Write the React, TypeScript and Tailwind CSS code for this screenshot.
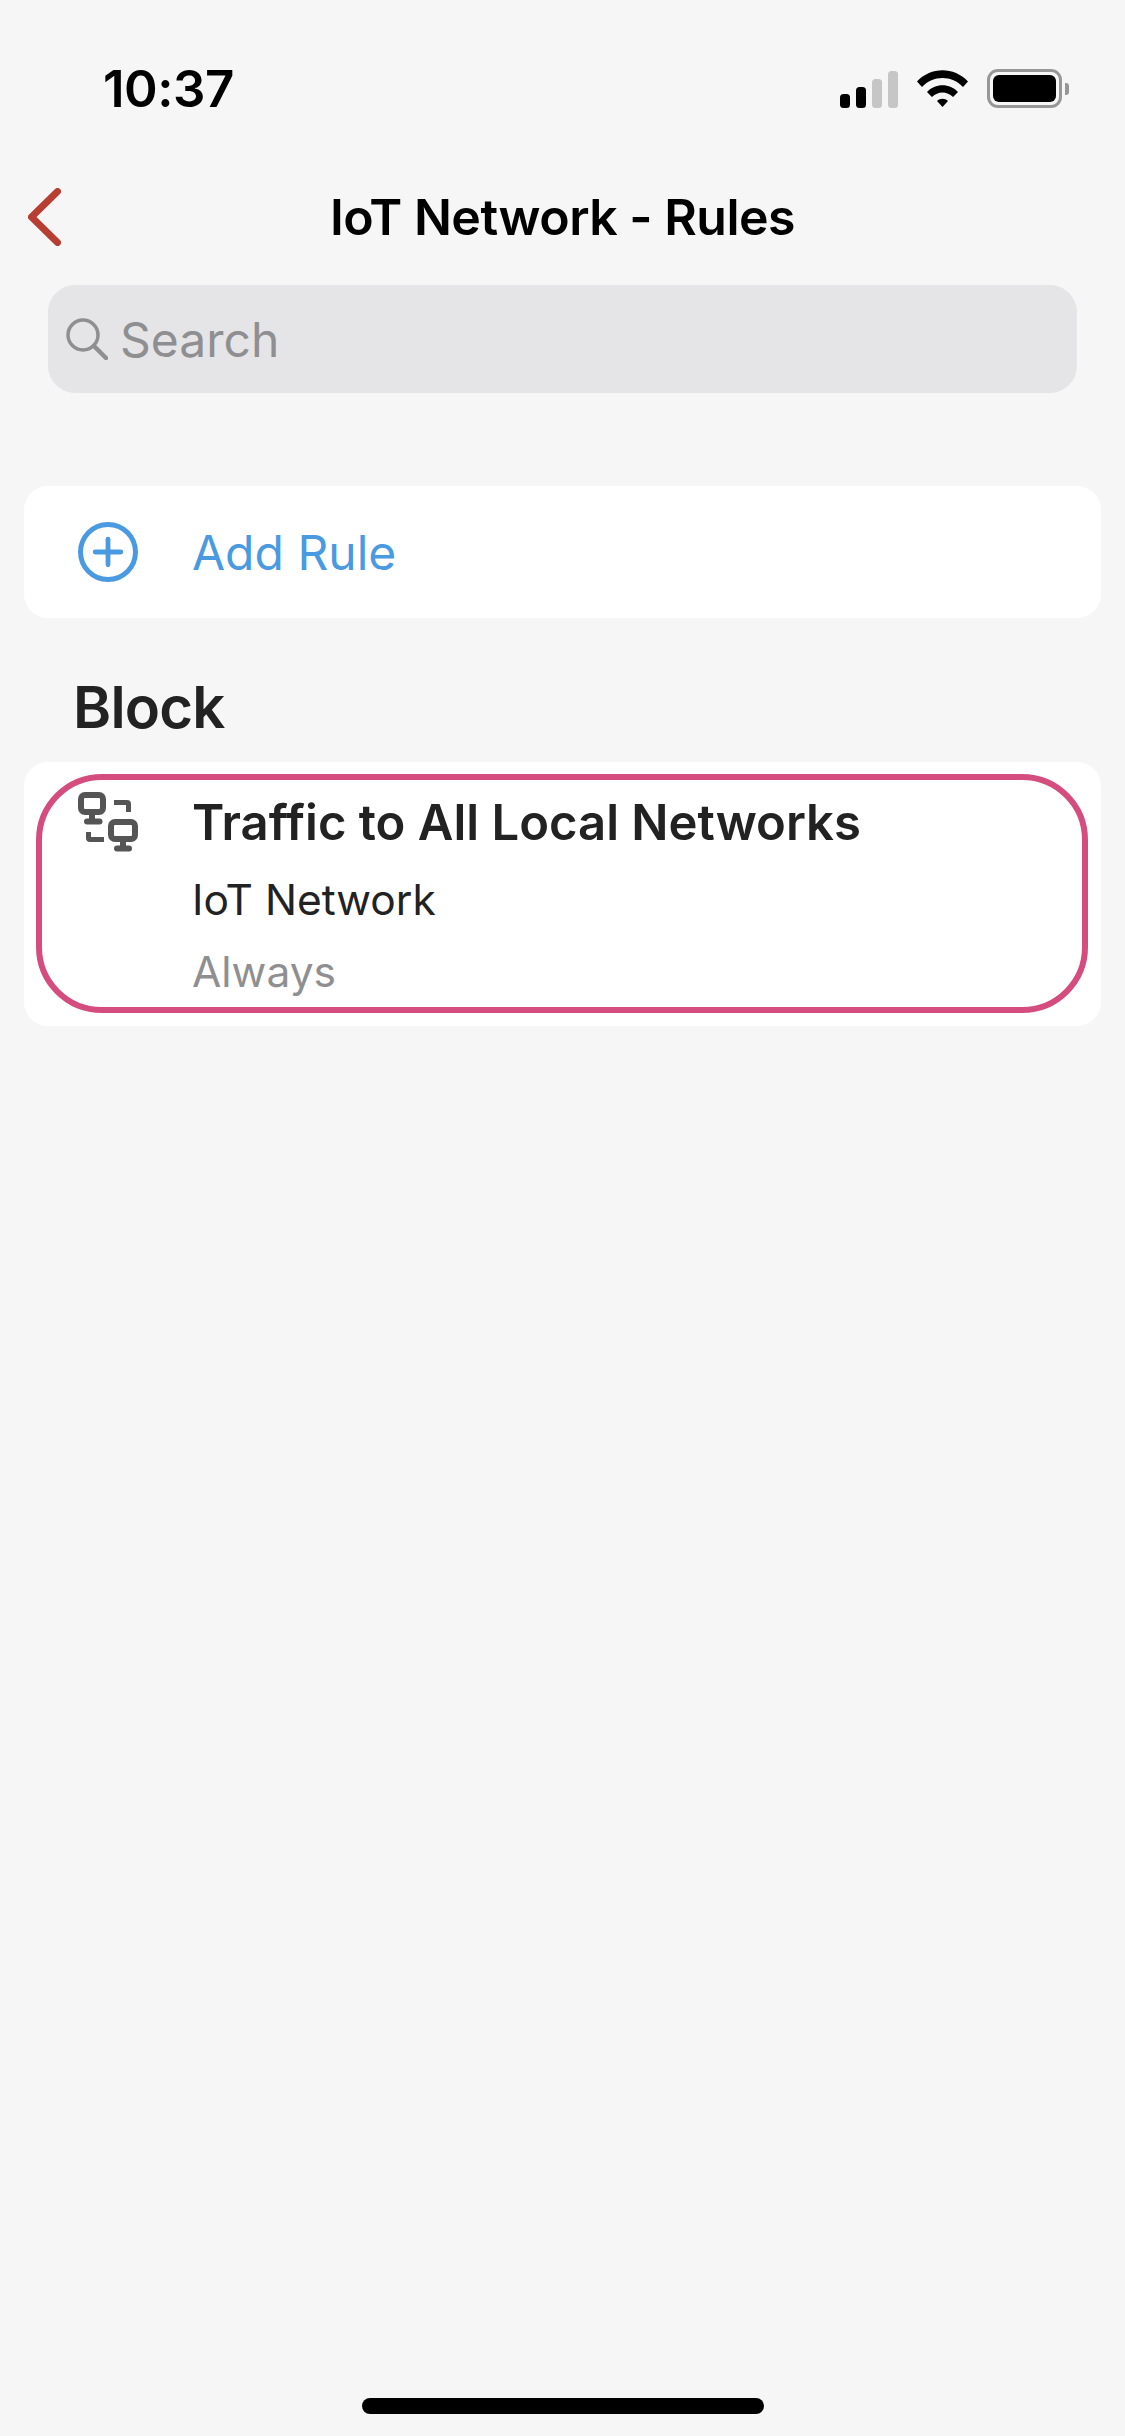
import { Plus } from "lucide-react";

function StatusIcons() {
  return (
    <div className="flex items-center">
      <svg width="58" height="37" viewBox="0 0 58 37" className="mt-[1px]">
        <rect x="0" y="23" width="10" height="14" rx="3.5" fill="#000" />
        <rect x="16" y="16" width="10" height="21" rx="3.5" fill="#000" />
        <rect x="32" y="8" width="10" height="29" rx="3.5" fill="#c6c6c6" />
        <rect x="48" y="0" width="10" height="37" rx="3.5" fill="#c6c6c6" />
      </svg>
      <svg width="51" height="37" viewBox="0 0 51 37" className="ml-[19px]">
        <path d="M0 11.5C14-3.5 37-3.5 51 11.5L46 17C35 5 16 5 5 17Z" fill="#000" />
        <path d="M10 22C18 13 33 13 41 22L36 27C30 21 21 21 15 27Z" fill="#000" />
        <path d="M20 31C23 28 28 28 31 31L25.5 37Z" fill="#000" />
      </svg>
      <div className="ml-[19px] flex h-[39px] w-[75px] rounded-[11px] border-[3px] border-[#979797] p-[3px]">
        <div className="flex-1 rounded-[6px] bg-black" />
      </div>
      <div className="ml-[3px] h-[12px] w-[4px] rounded-r-[3px] bg-[#979797]" />
    </div>
  );
}

function NetworkIcon() {
  return (
    <svg width="60" height="60" viewBox="0 0 60 60" fill="none" stroke="#555" strokeWidth="6" strokeLinecap="round" strokeLinejoin="round" className="shrink-0">
      <rect x="3" y="3" width="22" height="17" rx="4" />
      <path d="M14 21V27" strokeLinecap="butt" />
      <path d="M9 29.5H21.5" />
      <rect x="33" y="30" width="24" height="17" rx="4" />
      <path d="M45 48V54" strokeLinecap="butt" />
      <path d="M39 56.5H51" />
      <path d="M36 10.5H49Q50.5 10.5 50.5 12V20" strokeLinecap="butt" strokeWidth="5" />
      <path d="M10.5 40V46Q10.5 47.5 12 47.5H26" strokeLinecap="butt" strokeWidth="5" />
    </svg>
  );
}

export default function App() {
  return (
    <div className="flex h-[2436px] w-[1125px] flex-col overflow-hidden bg-[#f6f6f6] font-['Inter',sans-serif] text-[#222]">
      <div className="flex h-[108px] items-end justify-between pl-[103px] pr-[56px]">
        <span className="-mb-[6px] text-[51px] leading-[50px] font-semibold tracking-[-0.5px] text-black">10:37</span>
        <StatusIcons />
      </div>

      <div className="mt-[80px] grid h-[56px] grid-cols-[1fr_auto_1fr] items-center">
        <svg width="33" height="58" viewBox="0 0 33 58" fill="none" stroke="#b83d33" strokeWidth="7" strokeLinecap="round" strokeLinejoin="round" className="ml-[28px]">
          <path d="M29.5 3.5L3.5 29L29.5 54.5" />
        </svg>
        <h1 className="text-[50px] leading-[56px] font-semibold tracking-[-0.5px] text-black">IoT Network - Rules</h1>
        <div />
      </div>

      <div className="mx-[48px] mt-[41px] flex h-[108px] items-center rounded-[27px] bg-[#e5e5e7] pl-[18px] text-[#8f8f91]">
        <svg width="42" height="42" viewBox="0 0 42 42" fill="none" stroke="currentColor" strokeWidth="3.5" strokeLinecap="round" className="shrink-0">
          <circle cx="17" cy="17" r="15" />
          <path d="M28 28L40 40" strokeWidth="4.5" />
        </svg>
        <span className="mt-[2px] ml-[12px] text-[48px] leading-none">Search</span>
      </div>

      <div className="mx-[24px] mt-[93px] flex h-[132px] items-center rounded-[24px] bg-white pl-[54px] text-[#4a9ae1]">
        <div className="flex h-[60px] w-[60px] items-center justify-center rounded-full border-[5px] border-[#4a9ae1]">
          <Plus size={44} strokeWidth={2.6} />
        </div>
        <span className="mt-[2px] ml-[54px] text-[48px] leading-none">Add Rule</span>
      </div>

      <h2 className="mt-[57px] mb-[-1px] pl-[73px] text-[58px] leading-[64px] font-semibold tracking-[-0.8px]">Block</h2>

      <div className="mx-[24px] mt-[24px] rounded-[24px] bg-white pt-[12px] pr-[13px] pb-[13px] pl-[12px]">
        <div className="flex h-[239px] rounded-[66px] border-[6px] border-[#d44d7e] pt-[12px] pl-[36px]">
          <NetworkIcon />
          <div className="ml-[54px] flex flex-col pt-[3px]">
            <span className="text-[49px] leading-[56px] font-semibold">Traffic to All Local Networks</span>
            <span className="mt-[23px] text-[42.5px] leading-[52px]">IoT Network</span>
            <span className="mt-[21px] text-[42.5px] leading-[50px] text-[#8f8f91]">Always</span>
          </div>
        </div>
      </div>

      <div className="mt-auto mb-[22px] h-[16px] w-[402px] self-center rounded-full bg-black" />
    </div>
  );
}
